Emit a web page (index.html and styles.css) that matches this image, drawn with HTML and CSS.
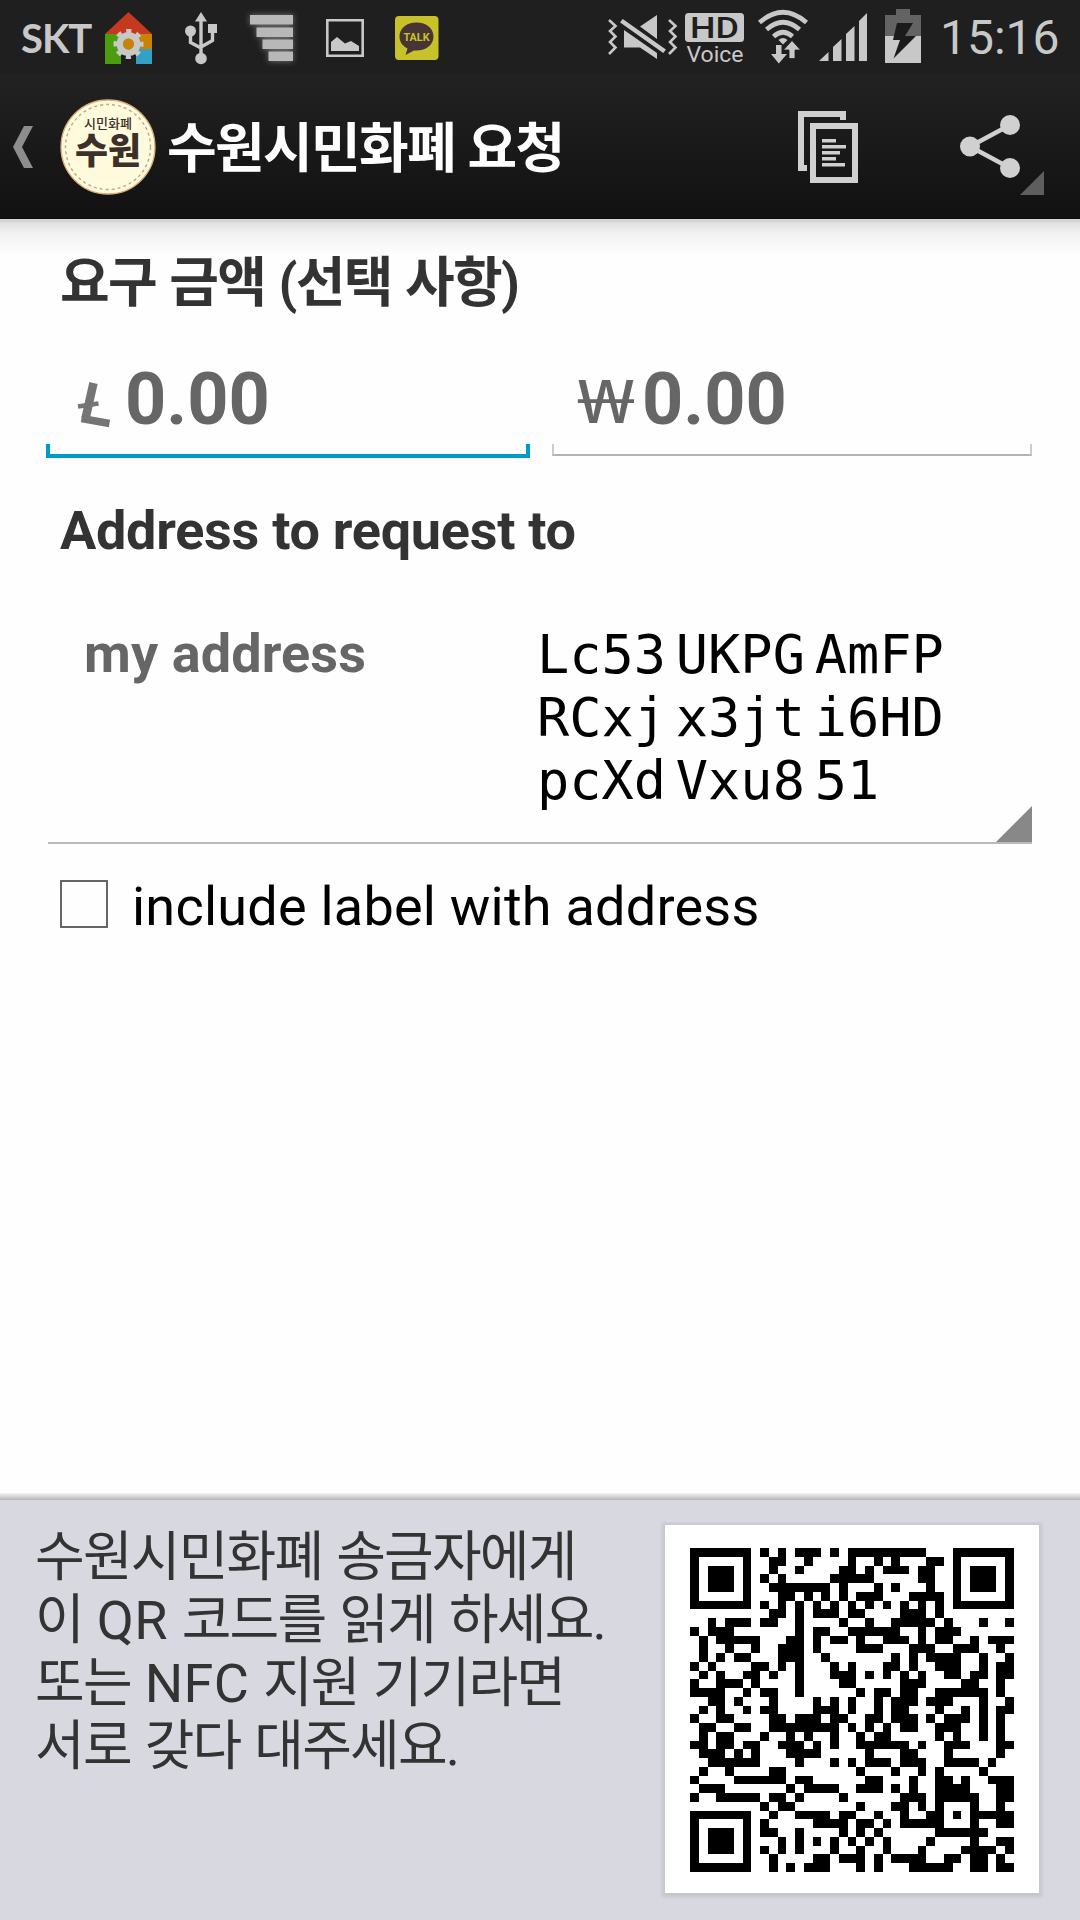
FILE: index.html
```html
<!DOCTYPE html>
<html lang="ko">
<head>
<meta charset="utf-8">
<title>수원시민화폐 요청</title>
<link rel="stylesheet" href="styles.css">
</head>
<body>
<div class="screen">
  <header class="status">
    <span class="carrier">SKT</span>
    <svg class="ic house" width="48" height="52" viewBox="0 0 48 52">
      <path fill="#c6391f" d="M23.500 0L47 22H0z"/>
      <path fill="#4c9c10" d="M0 22h24v20l-7 10H0z"/>
      <path fill="#c98208" d="M24 22h23v15H24z"/>
      <path fill="#34a0c6" d="M31 37h16v15H31z"/>
      <path fill="#1f1f1f" d="M16 43h15v9H16z"/>
      <circle cx="23.500" cy="32" r="8.700" fill="none" stroke="#c8c8c8" stroke-width="6.500"/>
      <circle cx="23.500" cy="32" r="13" fill="none" stroke="#c8c8c8" stroke-width="4" stroke-dasharray="5.200 5" stroke-dashoffset="2.600"/>
      <circle cx="23.500" cy="32" r="5.500" fill="#c98208"/>
    </svg>
    <svg class="ic usb" width="32" height="53" viewBox="0 0 32 53" fill="#c8c8c8">
      <path d="M16 0l6 9.500H10z"/>
      <circle cx="5.500" cy="19" r="5.500"/><circle cx="16" cy="46.500" r="5.800"/>
      <path d="M23 12h9v9h-9z"/>
      <path fill="none" stroke="#c8c8c8" stroke-width="3.400" d="M16 6v40M5.500 20v10.500L16 36M27.500 20v8.500L16 35"/>
    </svg>
    <svg class="ic stairs" width="44" height="46" viewBox="0 0 44 46" fill="#b8b8b8">
      <path d="M0 0h43v9.500H0zM6.500 12.500H43V22H6.500zM12.500 24.500H43v9.500H12.500zM18.500 36.500H43V46H18.500z"/>
    </svg>
    <svg class="ic photo" width="38" height="38" viewBox="0 0 38 38">
      <path fill="none" stroke="#c8c8c8" stroke-width="2.600" d="M1.300 1.300h35.400v35.400H1.300z"/>
      <path fill="#c8c8c8" d="M5 32V23l6-5 8 6.500 6-2.500 8 5v5z"/>
    </svg>
    <svg class="ic talk" width="44" height="44" viewBox="0 0 44 44">
      <rect width="43.500" height="44" rx="4" fill="#c8c22a"/>
      <path fill="#483434" d="M21.500 6.500c10 0 17 6 17 14s-7 14-17 14h-2.500l-8.500 4.500 2-6.500C7.500 30 4.500 26 4.500 20.500c0-8 7-14 17-14z"/>
      <text class="talk-text" x="21.500" y="25" text-anchor="middle" textLength="26" lengthAdjust="spacingAndGlyphs">TALK</text>
    </svg>
    <span class="grow"></span>
    <svg class="ic mute" width="70" height="46" viewBox="0 0 70 46" fill="#c8c8c8">
      <path fill="none" stroke="#c8c8c8" stroke-width="2.600" d="M1 5l6.500 6-5.500 5 5.500 5.500-5.500 5.500 5.500 5.500L1 39M61 5l6.500 6-5.500 5 5.500 5.500-5.500 5.500 5.500 5.500L61 39"/>
      <path d="M49 0v24L32 11.500zM16 15l33 23v6L32 32.500H16z"/>
      <path stroke="#1f1f1f" stroke-width="1.500" d="M14.500 3L59 34.500 55.500 39 11 7.500z"/>
    </svg>
    <svg class="ic hd" width="60" height="50" viewBox="0 0 60 50">
      <rect width="59" height="29" rx="3.500" fill="#c8c8c8"/>
      <text class="hd-text" x="29.500" y="24.500" text-anchor="middle" textLength="49" lengthAdjust="spacingAndGlyphs">HD</text>
      <text class="voice-text" x="30" y="48.500" text-anchor="middle" textLength="57" lengthAdjust="spacingAndGlyphs">Voice</text>
    </svg>
    <svg class="ic wifi" width="50" height="54" viewBox="0 0 50 54" fill="#c8c8c8">
      <g fill="none" stroke="#c8c8c8" stroke-width="4.600">
        <path d="M1.500 12.500Q25-8 48.500 12.500M8.500 19.500Q25 5 41.500 19.500M15.500 26.500Q25 18 34.500 26.500"/>
      </g>
      <path d="M20.500 30q4.500-4 9 0L25 34.500z"/>
      <path d="M18 35h5.500v9H29l-8.200 9.500L13 44h5z"/>
      <path stroke="#1f1f1f" stroke-width=".8" d="M31 48.500V40h-5.500L34 30.500l8.500 9.500H37v8.500z"/>
    </svg>
    <svg class="ic signal" width="48" height="49" viewBox="0 0 48 49" fill="#c8c8c8">
      <path d="M0 48l9.500-9v9zM14 48V34l8.500-8v22zM27 48V21l8.500-8v35zM40 48V8l8-8v48z"/>
    </svg>
    <svg class="ic battery" width="36" height="54" viewBox="0 0 36 54">
      <path fill="#636363" d="M11 0h14v6h11v21H0V6h11z"/>
      <path fill="#c8c8c8" d="M0 27h36v27H0z"/>
      <path fill="#1b1b1b" d="M12 14h16l-8 13h11L8.500 49.500 15 31H8z"/>
    </svg>
    <time class="clock">15:16</time>
  </header>

  <nav class="bar">
    <svg class="back" width="20" height="42" viewBox="0 0 20 42"><path fill="#8d8d8d" d="M11 0h9L9 21l11 21h-9L0 21z"/></svg>
    <svg class="logo" width="96" height="96" viewBox="0 0 96 96">
      <circle cx="48" cy="48" r="47" fill="#fffadc" stroke="#dcae7c" stroke-width="1.300"/>
      <circle cx="48" cy="48" r="42.500" fill="none" stroke="#b9a98c" stroke-width="1.400" stroke-dasharray="3 3"/>
      <text class="logo-small" x="48" y="29" text-anchor="middle" textLength="48" lengthAdjust="spacingAndGlyphs">시민화폐</text>
      <text class="logo-big" x="48" y="65" text-anchor="middle" textLength="66" lengthAdjust="spacingAndGlyphs">수원</text>
    </svg>
    <h1 class="title">수원시민화폐 요청</h1>
    <svg class="copy" width="61" height="72" viewBox="0 0 61 72" fill="#d0d0d0">
      <path d="M0 0h48v9h-6V6H6v48h3v6H0z"/>
      <path fill-rule="evenodd" d="M12 12h48v60H12zM18 18v48h36V18z"/>
      <path d="M24 28h14v3.500H24zM24 34h24v3.500H24zM24 40h18v3.500H24zM24 46h14v3.500H24zM24 52h23v3.500H24z"/>
    </svg>
    <div class="share">
      <svg width="84" height="84" viewBox="0 0 84 84" fill="#d0d0d0">
        <path fill="none" stroke="#d0d0d0" stroke-width="4.500" d="M50 12L10 33.500 50 55"/>
        <circle cx="10" cy="33.500" r="10"/><circle cx="50" cy="12" r="10"/><circle cx="50" cy="55" r="10"/>
        <path fill="#5e5e5e" d="M84 58v24H60z"/>
      </svg>
    </div>
  </nav>

  <main class="content">
    <h2 class="heading first">요구 금액 (선택 사항)</h2>
    <div class="amounts">
      <div class="field focus">
        <svg class="lite" width="33" height="46" viewBox="0 0 33 46" fill="none" stroke="#757575">
          <path stroke-width="8.500" d="M15.500 1L7.500 36.500"/><path stroke-width="7.500" d="M3.500 36.500L31.500 41.500"/><path stroke-width="4.500" d="M0 24.500L20.500 21.500"/>
        </svg>
        <span class="num">0.00</span>
      </div>
      <div class="field">
        <span class="won">₩</span>
        <span class="num">0.00</span>
      </div>
    </div>
    <h2 class="heading second">Address to request to</h2>
    <div class="picker">
      <span class="label">my address</span>
      <div class="address">Lc53 UKPG AmFP<br>RCxj x3jt i6HD<br>pcXd Vxu8 51</div>
      <svg class="corner" width="36" height="36" viewBox="0 0 36 36"><path fill="#888" d="M36 0v36H0z"/></svg>
    </div>
    <label class="check"><span class="box"></span><span>include label with address</span></label>
  </main>

  <footer class="panel">
    <p class="hint">수원시민화폐 송금자에게<br>이 <span class="latin">QR</span> 코드를 읽게 하세요.<br>또는 <span class="latin">NFC</span> 지원 기기라면<br>서로 갖다 대주세요.</p>
    <div class="card"><svg id="qr" width="324" height="324" viewBox="0 0 37 37" shape-rendering="crispEdges"><path id="modules"/></svg></div>
  </footer>
</div>
<script src="qr.js"></script>
</body>
</html>
```
FILE: styles.css
```css
*, *::after { box-sizing: border-box; }
body { margin: 0; }
h1, h2, p { margin: 0; }
svg { display: block; flex: none; overflow: visible; }
.screen {
  width: 1080px; height: 1920px; overflow: hidden;
  display: flex; flex-direction: column; background: #fefefe;
  font-family: Roboto, "Noto Sans CJK KR", sans-serif;
  font-size: 54px; line-height: 63px; color: #000;
}
.status { height: 75px; flex: none; background: #1f1f1f; color: #c8c8c8; display: flex; align-items: flex-start; }
.grow { flex: 1; }
.carrier { font: 700 40px/48px Lato, sans-serif; width: 84px; margin: 14px 0 0 21px; white-space: nowrap; letter-spacing: -1px; }
.house { margin-top: 12px; }
.usb { margin: 12px 0 0 32px; }
.stairs { margin: 15px 0 0 33px; filter: drop-shadow(0 0 3px #777); }
.photo { margin: 19px 0 0 32px; }
.talk { margin: 16px 0 0 31px; }
.talk-text { font: 700 11px Roboto, sans-serif; fill: #c8c22a; }
.mute { margin: 15px 7px 0 0; }
.hd { margin: 13px 13px 0 0; }
.hd-text { font: 500 29px Roboto, sans-serif; fill: #1f1f1f; }
.voice-text { font: 400 22px Roboto, sans-serif; fill: #c8c8c8; }
.wifi { margin: 10px 11px 0 0; }
.signal { margin: 13px 18px 0 0; }
.battery { margin: 9px 19px 0 0; }
.clock { font-size: 48px; line-height: 56px; width: 140px; margin-top: 10px; }
.bar {
  height: 144px; flex: none; display: flex; align-items: flex-start; color: #fff;
  background: linear-gradient(#222, #111);
}
.back { margin: 51px 0 0 13px; }
.logo { margin: 24px 0 0 27px; }
.logo-small { font: 500 13px "Noto Sans CJK KR", sans-serif; fill: #3d302b; }
.logo-big { font: 900 36px "Noto Sans CJK KR", sans-serif; fill: #3d302b; }
.title { font-size: 54px; font-weight: 700; line-height: 63px; letter-spacing: -1.700px; word-spacing: 1px; margin: 43px 0 0 11px; flex: 1; }
.copy { margin-top: 36px; }
.share { margin: 38px 36px 0 101px; }
.content {
  height: 1274px; flex: none; padding: 33px 48px 0 46px;
  background: linear-gradient(#d4d4d4 0 3px, #e0e0e0 3px, #f2f2f2 15px, #fefefe 36px);
}
.heading { font-size: 54px; line-height: 63px; font-weight: 700; color: #333; padding-left: 14px; }
.first { letter-spacing: -1.700px; word-spacing: 1.600px; }
.amounts { display: flex; gap: 22px; margin-top: 42px; }
.field {
  position: relative; width: 480px; height: 99px; display: flex; color: #666;
}
.field::after {
  content: ""; position: absolute; left: 0; right: 0; bottom: 0; height: 12px;
  border: 2px solid #b4b4b4; border-top: 0; border-left-color: #ccc; border-right-color: #ccc;
}
.focus { width: 484px; height: 101px; }
.focus::after { height: 14px; border: 4px solid #0099cc; border-top: 0; }
.lite { margin: 25px 14px 0 32px; }
.num { font-size: 72px; line-height: 84px; font-weight: 700; padding-top: 1px; }
.won { font-family: "Noto Sans", sans-serif; font-size: 60px; line-height: 84px; margin: 1px 0 0 25px; width: 65px; transform: scaleX(1.440); transform-origin: left; }
.second { margin-top: 41px; letter-spacing: -.280px; }
.picker {
  position: relative; height: 282px; margin: 0 0 0 2px; padding-top: 60px;
  display: flex; border-bottom: 2px solid #bbb;
}
.label { width: 489px; padding-left: 36px; font-weight: 700; color: #666; letter-spacing: .100px; }
.address { font-family: "DejaVu Sans Mono", monospace; font-size: 53.600px; word-spacing: -22.500px; white-space: nowrap; padding-top: 1px; }
.corner { position: absolute; right: 0; bottom: 0; }
.check { display: flex; align-items: center; gap: 24px; margin: 31px 0 0 14px; letter-spacing: .230px; }
.box { width: 48px; height: 48px; border: 2px solid #666; margin-top: -6px; }
.panel {
  height: 427px; flex: none; display: flex; justify-content: space-between; align-items: flex-start;
  padding: 32px 41px 0 35px;
  background: linear-gradient(#f4f4f4, #b5b5b9 7px, #d8d8e1 7px);
}
.hint { color: #333; letter-spacing: -1.800px; word-spacing: 2.300px; white-space: nowrap; padding-top: 1px; }
.latin { letter-spacing: .300px; }
.card { width: 374px; height: 368px; padding: 23px 25px; background: #fff; box-shadow: 0 1px 3px 3px #c6c6cd; }
```
FILE: qr.js
```js
// Dark modules of each row, as column ranges.
const rows = `0-6,8,10,12-14,16,18-26,30-36
0,6,9,10,13,18,21,23,27,28,30,36
0,2-4,6,9,12,17,18,20,22-24,26,27,30,32-34,36
0,2-4,6,8,10,16-20,26,27,30,32-34,36
0,2-4,6,9-15,17,21,23,27,30,32-34,36
0,6,10,11,13,15,17,19-21,25-28,30,36
0-6,8,10,12,14,16,18,20,22,24,26,28,30-36
9,10,12,14-16,18,19,24-26,28
2,4-6,8,9,12,17,20,23-27,29,33,36
0,2-4,12,14,15,18-23,26,28-30
1,3-7,11,12,14,16,17,19,22-24,26,28,29,32,34-36
1,4,7,10-12,14,19-21,25-27,30-32,35
1,3,5,6,10-12,15,23,25,27-30,33,36
0,2,7,8,10,12,16,18,22,23,25,28-30,33,35,36
1,3,6,7,9,12,16-18,20,22,24,26,29,30,32,33,35,36
0,3-5,7,12,17,18,24-26,31,32,35
0-3,6,8,9,12,19,21,22,24,25,28-33,35
2,3,5,9,14,16,18,21,23-25,27-29,33,36
1,3,6,8,9,14-16,18,21,23,24,28,31,33,35,36
0,3,4,9,10,12-14,16,17,20,21,23-25,27,29-31,33,35
1,2,5,6,9-16,18,20,22,24,25,28-30,33,35
1,3,4,8,11,13,16,19,21,22,28,30,33,35
0,1,3,4,6,7,10-12,14,16,19-24,26,29-31,35,36
1-3,5,7,11-14,20,24,25,29,35
2-7,12,16,18,20-22,24-26,29-32,34
1,4,9,10,19,23,26,28,33
0,5-10,12,13,20,21,25,28,29,31,34-36
1-3,11,13-16,19-21,23,25,28-31,35,36
0,3-7,9,10,12,17,24-26,28-32,35,36
8,10,11,19,23,24,26,28,32,35
0-6,9,12-15,17,18,21,24,27,28,30,32-36
0,6,8,14-17,19,20,22,24-28,32,35,36
0,2-4,6,8,9,12,17,19,21,28-33
0,2-4,6,10,12,14,16,18,20,22,27,32,35,36
0,2-4,6,8,10,12,16,19,22,26,31-34,36
0,6,9,14,15,17-19,21,23-26,29,30,32,33,35
0-6,9,11,13-15,19,21,25-29,32,33,35,36`.split("\n");

document.getElementById("modules").setAttribute("d", rows.map((row, y) =>
  row.split(",").map(run => {
    const [a, b = a] = run.split("-").map(Number);
    return `M${a} ${y}h${b - a + 1}v1H${a}z`;
  }).join("")).join(""));
```
